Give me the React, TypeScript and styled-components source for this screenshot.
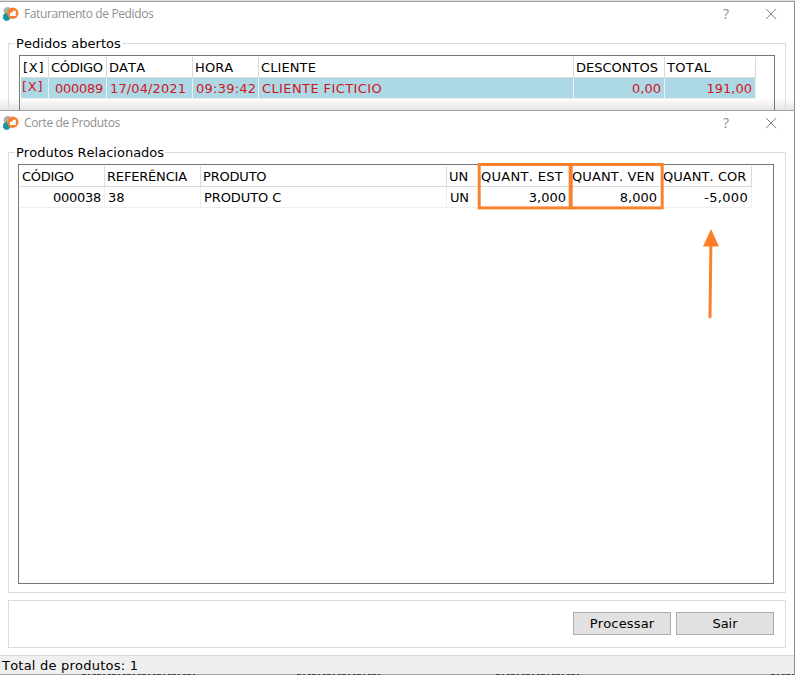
import React from 'react';
import styled, { createGlobalStyle, css } from 'styled-components';

const GlobalStyle = createGlobalStyle`
  * { box-sizing: border-box; }
  body { margin: 0; background: #fff; overflow: hidden; }
`;

const Desktop = styled.div`
  position: relative;
  width: 795px;
  height: 675px;
  overflow: hidden;
  display: flex;
  flex-direction: column;
  background: #fff;
  color: #000;
  font: 13px/16px Verdana, 'DejaVu Sans', sans-serif;
  font-kerning: none;
`;

const Window = styled.section<{ $height: number; $back?: boolean }>`
  height: ${p => p.$height}px;
  flex: none;
  overflow: hidden;
  display: flex;
  flex-direction: column;
  border-top: 1px solid #a2a2a2;
  border-right: 1px solid #8d8d8d;
  ${p => p.$back && css`
    margin-top: 1px;
    background: linear-gradient(#fff 0 97px, #f8f8f8 99px, #e4e4e4 109px);
    box-shadow: 0 -1px #dedede;
  `}
`;

const TitleBar = styled.header`
  height: 25px;
  flex: none;
  display: flex;
  align-items: center;
  padding: 0 17px 1px 2px;
  color: #8f8f8f;
  font: 12px/16px 'Segoe UI', 'Open Sans', sans-serif;
`;

const TitleText = styled.span<{ $ls: number }>`
  margin-left: 5px;
  flex: 1;
  letter-spacing: ${p => p.$ls}px;
`;

const HelpMark = styled.span`
  font-size: 14px;
  width: 7px;
  margin-right: 35px;
`;

const Group = styled.div<{ $height: number; $inset: number; $right: number }>`
  position: relative;
  flex: none;
  height: ${p => p.$height}px;
  margin: 16px 8px 0;
  padding: 11px ${p => p.$right}px 8px ${p => p.$inset}px;
  border: 1px solid #dcdcdc;
  display: flex;
`;

const Caption = styled.span<{ $ls: number }>`
  position: absolute;
  top: -8px;
  left: 6px;
  padding: 0 1px;
  background: #fff;
  white-space: nowrap;
  letter-spacing: ${p => p.$ls}px;
`;

const Grid = styled.div`
  flex: 1;
  border: 1px solid #777;
  padding: 1px;
`;

const Row = styled.div<{ $columns: string; $selected?: boolean; $header?: boolean; $height: number }>`
  display: grid;
  grid-template-columns: ${p => p.$columns};
  width: max-content;
  height: ${p => p.$height}px;
  background: ${p => (p.$selected ? '#add8e6' : '#fff')};
  color: ${p => (p.$selected ? '#d0161f' : '#000')};
  --rule: ${p => (p.$header ? '#dadada' : '#eee')};
`;

const Cell = styled.div<{ $right?: boolean; $ls?: number; $pad?: number; $up?: number }>`
  border-right: 1px solid var(--rule);
  border-bottom: 1px solid var(--rule);
  padding: ${p => 3 - (p.$up ?? 0)}px ${p => (p.$right ? p.$pad ?? 3 : 0)}px 0 ${p => (p.$right ? 0 : p.$pad ?? 2)}px;
  text-align: ${p => (p.$right ? 'right' : 'left')};
  letter-spacing: ${p => p.$ls ?? 0}px;
  white-space: nowrap;
`;

const Actions = styled.div`
  height: 48px;
  flex: none;
  margin: 7px 8px 0;
  padding: 0 11px 1px;
  border: 1px solid #dcdcdc;
  display: flex;
  align-items: center;
  justify-content: flex-end;
  gap: 5px;
`;

const Button = styled.button<{ $ls: number }>`
  width: 98px;
  height: 23px;
  padding: 1px 0 0;
  border: 1px solid #adadad;
  background: #e1e1e1;
  color: #000;
  font: inherit;
  letter-spacing: ${p => p.$ls}px;
`;

const StatusBar = styled.footer`
  height: 19px;
  flex: none;
  margin-top: 7px;
  padding: 2px 2px 0;
  border-top: 1px solid #d8d8d8;
  background: #efefef;
  letter-spacing: 0.22px;
`;

const Underlay = styled.svg`
  display: block;
  flex: none;
  background: #a3a3a3;
`;

const Annotations = styled.svg`
  position: absolute;
  left: 470px;
  top: 155px;
`;

type CellData = { text: string; right?: boolean; ls?: number; pad?: number; up?: number };

function TableRow({ cells, columns, height, selected, header }: {
  cells: CellData[]; columns: string; height: number; selected?: boolean; header?: boolean;
}) {
  return (
    <Row $columns={columns} $height={height} $selected={selected} $header={header}>
      {cells.map((c, i) => (
        <Cell key={i} $right={c.right} $ls={c.ls} $pad={c.pad} $up={c.up}>{c.text}</Cell>
      ))}
    </Row>
  );
}

function Logo() {
  return (
    <svg width="17" height="17" viewBox="0 1 17 17">
      <circle cx="5.8" cy="6.3" r="4.2" fill="#b0b0b0" />
      <circle cx="4.7" cy="12" r="3.4" fill="#1496a0" />
      <circle cx="4.7" cy="12" r="3.4" fill="none" stroke="#1496a0" strokeWidth="1.3" strokeDasharray="1.8 1" />
      <circle cx="10.8" cy="8.3" r="5.7" fill="#f58233" />
      <path d="M8 8l2.5-1 .8-1.3h2.5V11H8z" fill="#fff" />
    </svg>
  );
}

function Title({ text, ls }: { text: string; ls: number }) {
  return (
    <TitleBar>
      <Logo />
      <TitleText $ls={ls}>{text}</TitleText>
      <HelpMark>?</HelpMark>
      <svg width="12" height="12" viewBox="0 0 12 12">
        <path d="M.8.8l10.4 10.4M11.2.8L.8 11.2" stroke="#858585" fill="none" />
      </svg>
    </TitleBar>
  );
}

const orderColumns = '28px 58px 86px 66px 315px 91px 91px';
const orderHeads: CellData[] = [
  { text: '[X]', ls: 0.7 }, { text: 'CÓDIGO', ls: -0.3 }, { text: 'DATA', ls: 0.1 }, { text: 'HORA', ls: 0.1 },
  { text: 'CLIENTE', ls: 0.1 }, { text: 'DESCONTOS' }, { text: 'TOTAL', ls: 0.35 },
];
const order: CellData[] = [
  { text: '[X]', pad: 1, up: 2, ls: 0.7 }, { text: '000089', right: true, ls: -0.27 },
  { text: '17/04/2021', pad: 3, ls: 0.12 }, { text: '09:39:42', pad: 3, ls: 0.25 },
  { text: 'CLIENTE FICTICIO', pad: 3, ls: 0.4 },
  { text: '0,00', right: true }, { text: '191,00', right: true },
];

const productColumns = '85px 96px 246px 32px 92px 92px 89px';
const productHeads: CellData[] = [
  { text: 'CÓDIGO', ls: -0.3 }, { text: 'REFERÊNCIA', ls: -0.18 }, { text: 'PRODUTO', ls: -0.2 }, { text: 'UN' },
  { text: 'QUANT. EST', ls: 0.3 }, { text: 'QUANT. VEN', pad: 1, ls: 0.12 }, { text: 'QUANT. COR', pad: 0, ls: 0.05 },
];
const product: CellData[] = [
  { text: '000038', right: true, ls: -0.27 }, { text: '38', pad: 3 }, { text: 'PRODUTO C', pad: 3, ls: -0.1 },
  { text: 'UN', pad: 3, ls: -0.2 }, { text: '3,000', right: true, pad: 4 }, { text: '8,000', right: true, pad: 5 },
  { text: '-5,000', right: true, ls: 0.3 },
];

export default function App() {
  return (
    <Desktop>
      <GlobalStyle />
      <Window $height={109} $back>
        <Title text="Faturamento de Pedidos" ls={-0.38} />
        <Group $height={90} $inset={10} $right={10}>
          <Caption $ls={0.05}>Pedidos abertos</Caption>
          <Grid>
            <TableRow cells={orderHeads} columns={orderColumns} height={21} header />
            <TableRow cells={order} columns={orderColumns} height={21} selected />
          </Grid>
        </Group>
      </Window>
      <Window $height={564}>
        <Title text="Corte de Produtos" ls={-0.38} />
        <Group $height={441} $inset={9} $right={11}>
          <Caption $ls={0}>Produtos Relacionados</Caption>
          <Grid>
            <TableRow cells={productHeads} columns={productColumns} height={21} header />
            <TableRow cells={product} columns={productColumns} height={21} />
          </Grid>
        </Group>
        <Actions>
          <Button $ls={0.15}>Processar</Button>
          <Button $ls={0}>Sair</Button>
        </Actions>
        <StatusBar>Total de produtos: 1</StatusBar>
      </Window>
      <Underlay width="795" height="1">
        <path d="M82 .5H196M297 .5H381M496 .5H582M771 .5H795" stroke="#444" strokeDasharray="4 2 2 3 3 1" />
      </Underlay>
      <Annotations width="250" height="170">
        <g fill="none" stroke="#f9822f" strokeWidth="3">
          <rect x="9.2" y="9.5" width="91" height="43.4" />
          <rect x="101.2" y="9.5" width="91" height="43.4" />
          <path d="M240.9 89L240 162" strokeLinecap="round" />
        </g>
        <path d="M241 74L249 91.5H233z" fill="#ff7f27" />
      </Annotations>
    </Desktop>
  );
}
